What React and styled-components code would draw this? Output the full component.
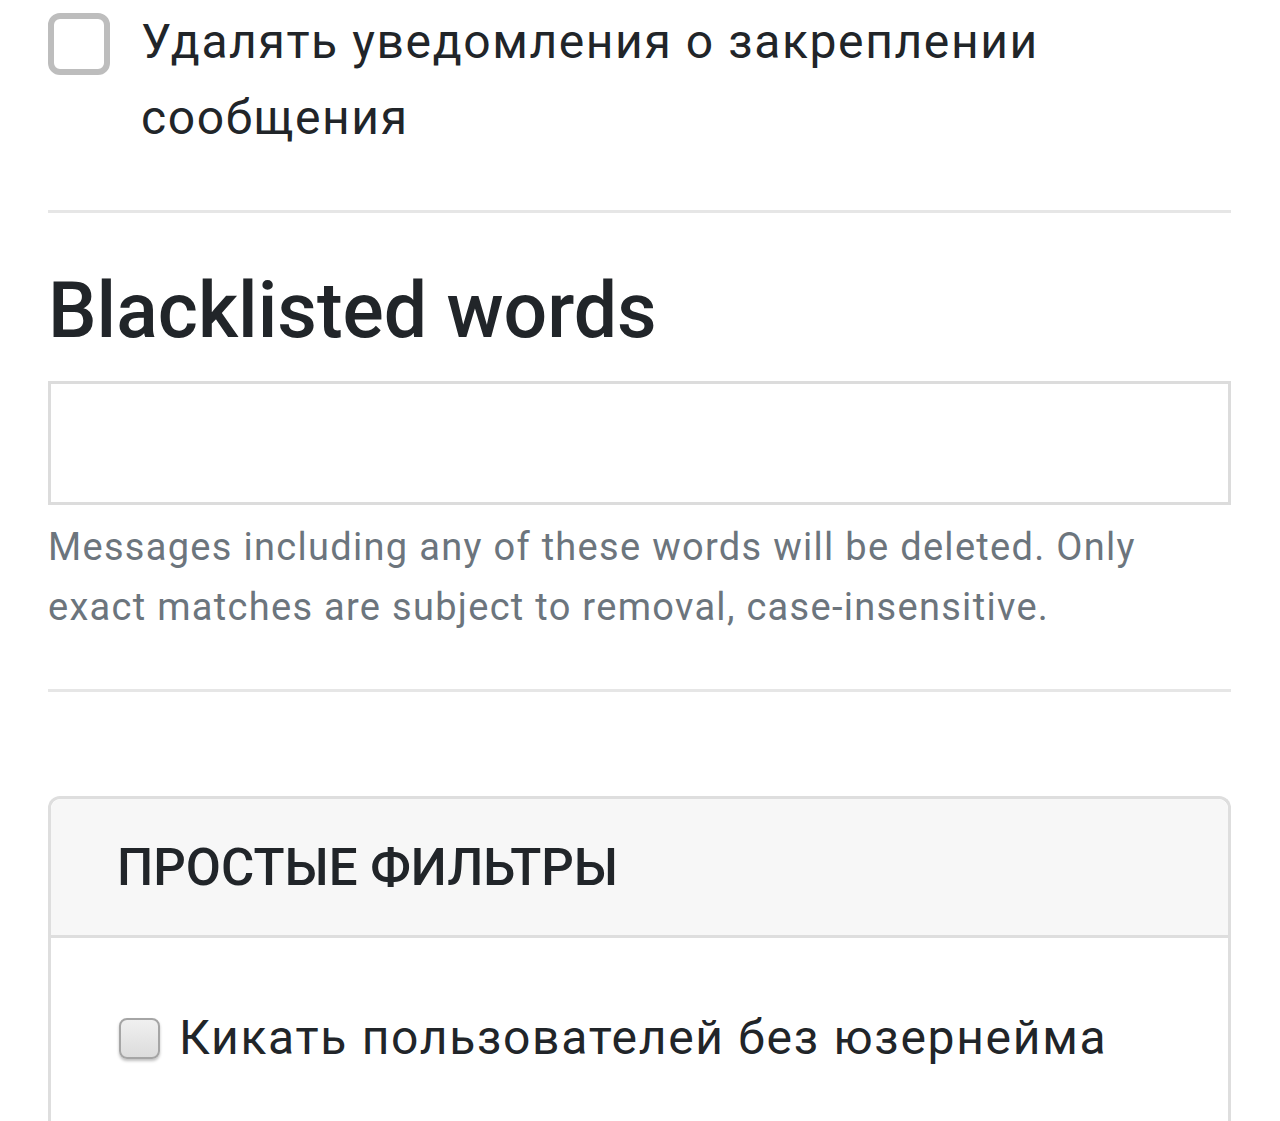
import React from 'react';
import styled, { createGlobalStyle } from 'styled-components';

const GlobalStyle = createGlobalStyle`
  html, body {
    margin: 0;
    padding: 0;
    background: #ffffff;
  }
  body {
    font-family: Roboto, "Noto Sans", "Liberation Sans", sans-serif;
    color: #212529;
  }
`;

const Page = styled.div`
  width: 1183px;
  padding: 4px 0 0 48px;
  overflow: hidden;
  height: 1117px;
`;

const CheckRow = styled.label`
  display: flex;
  align-items: flex-start;
  gap: 31px;
`;

const BigBox = styled.span`
  flex: none;
  width: 50px;
  height: 50px;
  margin-top: 9px;
  border: 6px solid #bdbdbd;
  border-radius: 12px;
  background: #fff;
`;

const CheckText = styled.span`
  font-size: 48px;
  line-height: 76px;
  letter-spacing: 1.6px;
  color: #212529;
`;

const Divider = styled.hr`
  border: 0;
  border-top: 3px solid #e6e6e6;
  margin: ${(p) => p.$top}px 0 0;
`;

const Heading = styled.h2`
  margin: 50px 0 0;
  font-size: 77px;
  line-height: 96px;
  font-weight: 500;
  letter-spacing: 0;
  color: #212529;
`;

const WordsInput = styled.input`
  display: block;
  box-sizing: border-box;
  width: 100%;
  height: 124px;
  margin-top: 22px;
  border: 3px solid #dcdcdc;
  background: #fff;
  outline: none;
`;

const Help = styled.p`
  margin: 12px 0 0;
  font-size: 38px;
  line-height: 60px;
  letter-spacing: 1.3px;
  color: #6c757d;
`;

const Card = styled.section`
  margin-top: 104px;
  border: 3px solid #dedede;
  border-radius: 12px 12px 0 0;
  border-bottom: 0;
`;

const CardHeader = styled.div`
  height: 136px;
  display: flex;
  align-items: center;
  padding-left: 66px;
  background: #f7f7f7;
  border-bottom: 3px solid #dedede;
  border-radius: 10px 10px 0 0;
  font-size: 51px;
  font-weight: 500;
  color: #212529;
`;

const CardBody = styled.div`
  padding: 70px 0 60px 68px;
`;

const SmallRow = styled.label`
  display: flex;
  align-items: center;
  gap: 19px;
`;

const SmallBox = styled.span`
  flex: none;
  width: 41px;
  height: 41px;
  border: 2px solid #a5a5a5;
  border-radius: 8px;
  background: linear-gradient(#f0f0f0, #dcdcdc);
  box-shadow: 0 2px 3px rgba(0, 0, 0, 0.25);
  box-sizing: border-box;
`;

const SmallText = styled.span`
  font-size: 48px;
  line-height: 60px;
  letter-spacing: 1.7px;
  color: #212529;
`;

export default function App() {
  return (
    <>
      <GlobalStyle />
      <Page>
        <CheckRow>
          <BigBox />
          <CheckText>
            Удалять уведомления о закреплении
            <br />
            сообщения
          </CheckText>
        </CheckRow>
        <Divider $top={54} />
        <Heading>Blacklisted words</Heading>
        <WordsInput type="text" />
        <Help>
          Messages including any of these words will be deleted. Only
          <br />
          exact matches are subject to removal, case-insensitive.
        </Help>
        <Divider $top={52} />
        <Card>
          <CardHeader>ПРОСТЫЕ ФИЛЬТРЫ</CardHeader>
          <CardBody>
            <SmallRow>
              <SmallBox />
              <SmallText>Кикать пользователей без юзернейма</SmallText>
            </SmallRow>
          </CardBody>
        </Card>
      </Page>
    </>
  );
}
